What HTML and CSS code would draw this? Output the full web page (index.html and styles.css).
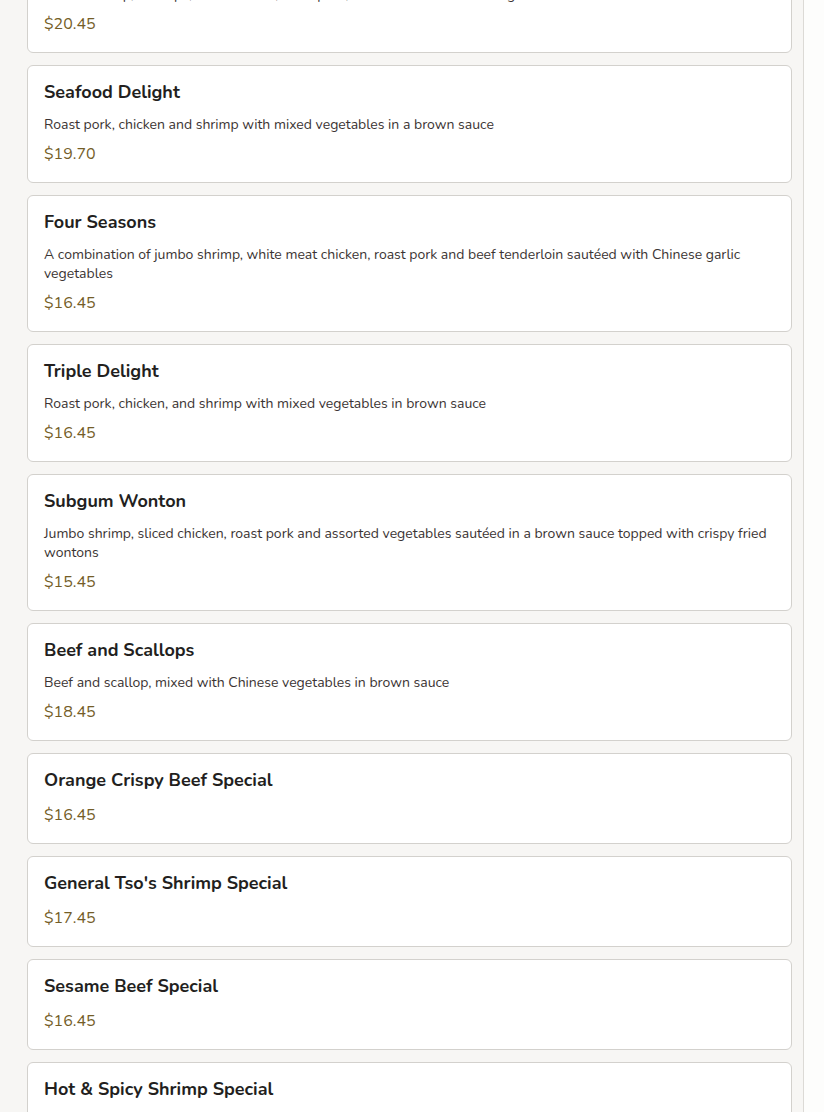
FILE: index.html
```html
<!DOCTYPE html>
<html lang="en">
<head>
  <meta charset="UTF-8" />
  <meta name="viewport" content="width=device-width, initial-scale=1.0" />
  <title>Chef's Specials</title>
  <link rel="stylesheet" href="styles.css">
</head>
<body>

  <div class="menu-panel">
    <!-- specials list (scrolled part way down) -->
    <div class="menu-list">

      <div class="dish">
        <h3 class="dish-name">Happy Family</h3>
        <p class="dish-desc">Jumbo shrimp, scallops, lobster meat, roast pork, chicken and beef with vegetables</p>
        <div class="dish-price">$20.45</div>
      </div>

      <div class="dish">
        <h3 class="dish-name">Seafood Delight</h3>
        <p class="dish-desc">Roast pork, chicken and shrimp with mixed vegetables in a brown sauce</p>
        <div class="dish-price">$19.70</div>
      </div>

      <div class="dish">
        <h3 class="dish-name">Four Seasons</h3>
        <p class="dish-desc">A combination of jumbo shrimp, white meat chicken, roast pork and beef tenderloin sautéed with Chinese garlic vegetables</p>
        <div class="dish-price">$16.45</div>
      </div>

      <div class="dish">
        <h3 class="dish-name">Triple Delight</h3>
        <p class="dish-desc">Roast pork, chicken, and shrimp with mixed vegetables in brown sauce</p>
        <div class="dish-price">$16.45</div>
      </div>

      <div class="dish">
        <h3 class="dish-name">Subgum Wonton</h3>
        <p class="dish-desc">Jumbo shrimp, sliced chicken, roast pork and assorted vegetables sautéed in a brown sauce topped with crispy fried wontons</p>
        <div class="dish-price">$15.45</div>
      </div>

      <div class="dish">
        <h3 class="dish-name">Beef and Scallops</h3>
        <p class="dish-desc">Beef and scallop, mixed with Chinese vegetables in brown sauce</p>
        <div class="dish-price">$18.45</div>
      </div>

      <div class="dish">
        <h3 class="dish-name">Orange Crispy Beef Special</h3>
        <div class="dish-price">$16.45</div>
      </div>

      <div class="dish">
        <h3 class="dish-name">General Tso's Shrimp Special</h3>
        <div class="dish-price">$17.45</div>
      </div>

      <div class="dish">
        <h3 class="dish-name">Sesame Beef Special</h3>
        <div class="dish-price">$16.45</div>
      </div>

      <div class="dish">
        <h3 class="dish-name">Hot &amp; Spicy Shrimp Special</h3>
        <div class="dish-price">$17.45</div>
      </div>

    </div>
  </div>

</body>
</html>
```

FILE: styles.css
```css
:root {
  --page-bg: #f7f6f4;
  --card-bg: #ffffff;
  --card-border: #d3d1cd;
  --title-color: #231f1e;
  --text-color: #3b3433;
  --price-color: #745d27;
}

body {
  margin: 0;
  background-color: #fdfdfc;
  font-family: 'Nunito', 'Lato', sans-serif;
  color: var(--text-color);
  height: 1112px;
  overflow: hidden;
}

.menu-panel {
  width: 804px;
  min-height: 100%;
  background-color: var(--page-bg);
  border-right: 1px solid #dcdad6;
  padding: 0 11px 0 27px;
  box-sizing: border-box;
}

.menu-list {
  display: flex;
  flex-direction: column;
  gap: 12px;
  margin-top: -65px;
}

.dish {
  display: flex;
  flex-direction: column;
  background: var(--card-bg);
  border: 1px solid var(--card-border);
  border-radius: 6px;
  padding: 16px;
}

.dish-name {
  margin: 0 0 12px;
  font-size: 18px;
  line-height: 20px;
  font-weight: 700;
  color: var(--title-color);
}

.dish-desc {
  margin: 1px 0 7px;
  font-size: 14px;
  line-height: 19px;
}

.dish-price {
  margin-top: 2px;
  font-size: 16px;
  line-height: 23px;
  color: var(--price-color);
}
```
